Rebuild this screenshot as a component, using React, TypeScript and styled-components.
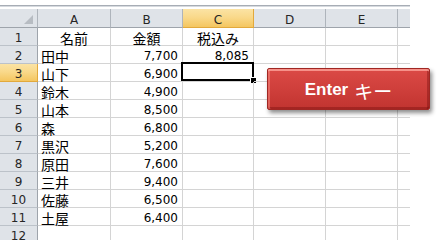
import React from "react";
import styled, { createGlobalStyle, css } from "styled-components";

const Global = createGlobalStyle`
  html, body { margin: 0; padding: 0; background: #ffffff; }
  body { width: 439px; height: 246px; overflow: hidden; }
`;

const Page = styled.div`
  position: relative;
  width: 439px;
  height: 240px;
  overflow: hidden;
  padding-top: 5px;
  box-sizing: border-box;
`;

const TopEdge = styled.div`
  width: 410px;
  height: 2px;
  box-sizing: border-box;
  border-top: 1px solid #a7adb5;
  border-bottom: 1px solid #d6dadf;
  margin-bottom: 2px;
`;

const Grid = styled.div`
  display: grid;
  width: 410px;
  grid-template-columns: 38px 73px 72px 71px 72px 72px 12px;
  grid-template-rows: 19px;
  grid-auto-rows: 18px;
`;

type Kind = "text" | "num" | "center";

const Cell = styled.div<{ $kind?: Kind; $last?: boolean }>`
  position: relative;
  box-sizing: border-box;
  border-right: ${(p) => (p.$last ? "none" : "1px solid #d4d4d4")};
  border-bottom: 1px solid #d4d4d4;
  display: flex;
  align-items: center;
  padding: 2px 3px 0 3px;
  white-space: nowrap;
  color: #000;
  ${(p) =>
    p.$kind === "num"
      ? css`
          justify-content: flex-end;
          font-family: "DejaVu Sans", "Liberation Sans", sans-serif;
          font-size: 12px;
          line-height: 13px;
          padding-right: 4px;
          padding-top: 3px;
        `
      : p.$kind === "center"
      ? css`
          justify-content: center;
          font-family: "Noto Sans CJK JP", "DejaVu Sans", sans-serif;
          font-size: 14px;
          line-height: 14px;
        `
      : css`
          justify-content: flex-start;
          font-family: "Noto Sans CJK JP", "DejaVu Sans", sans-serif;
          font-size: 14px;
          line-height: 14px;
        `}
`;

const activeHeader = css`
  background: linear-gradient(#fbe3a4 0%, #f9d98b 45%, #f4c660 100%);
  border-color: #e2a93c;
`;

const ColHead = styled.div<{ $active?: boolean; $last?: boolean }>`
  box-sizing: border-box;
  background: #dfe3e8;
  border-right: ${(p) => (p.$last ? "none" : "1px solid #aeb4bb")};
  border-bottom: 1px solid #9ea4ab;
  display: flex;
  align-items: center;
  justify-content: center;
  padding-top: 5px;
  font-family: "DejaVu Sans", "Liberation Sans", sans-serif;
  font-size: 12px;
  line-height: 13px;
  color: #262626;
  ${(p) => p.$active && activeHeader}
`;

const Corner = styled(ColHead)`
  justify-content: flex-end;
  align-items: flex-end;
  padding: 0 4px 3px 0;
`;

const RowHead = styled.div<{ $active?: boolean }>`
  box-sizing: border-box;
  background: #dfe3e8;
  border-right: 1px solid #9ea4ab;
  border-bottom: 1px solid #bcc2c9;
  display: flex;
  align-items: center;
  justify-content: center;
  padding-top: 3px;
  font-family: "DejaVu Sans", "Liberation Sans", sans-serif;
  font-size: 12px;
  line-height: 13px;
  color: #262626;
  ${(p) => p.$active && activeHeader}
`;

const Selection = styled.div`
  position: absolute;
  left: -2px;
  top: -2px;
  right: -1px;
  bottom: 0;
  border: 2px solid #000;
  pointer-events: none;
`;

const FillHandle = styled.div`
  position: absolute;
  right: -4px;
  bottom: -4px;
  width: 5px;
  height: 5px;
  background: #000;
  outline: 1px solid #fff;
`;

const EnterButton = styled.div`
  position: absolute;
  left: 267px;
  top: 68px;
  width: 163px;
  height: 42px;
  box-sizing: border-box;
  border-radius: 2px;
  border: 1px solid #a02723;
  background: linear-gradient(#db4a46 0%, #cf3f3b 50%, #c13430 100%);
  box-shadow:
    inset 0 2px 0 rgba(255, 170, 160, 0.75),
    inset 2px 0 0 rgba(255, 150, 140, 0.45),
    inset 0 -2px 0 rgba(110, 10, 8, 0.35),
    inset -2px 0 0 rgba(110, 10, 8, 0.35),
    2px 3px 4px rgba(0, 0, 0, 0.45);
  display: flex;
  align-items: center;
  justify-content: center;
  gap: 6px;
  color: #ffffff;
  padding-top: 2px;
`;

const Latin = styled.span`
  font-family: "Liberation Sans", Arial, sans-serif;
  font-weight: 700;
  font-size: 17px;
`;

const Kana = styled.span`
  font-family: "Noto Sans CJK JP", sans-serif;
  font-weight: 400;
  font-size: 19px;
`;

type Row = { a: string; b: string; c: string };

const rows: Row[] = [
  { a: "名前", b: "金額", c: "税込み" },
  { a: "田中", b: "7,700", c: "8,085" },
  { a: "山下", b: "6,900", c: "" },
  { a: "鈴木", b: "4,900", c: "" },
  { a: "山本", b: "8,500", c: "" },
  { a: "森", b: "6,800", c: "" },
  { a: "黒沢", b: "5,200", c: "" },
  { a: "原田", b: "7,600", c: "" },
  { a: "三井", b: "9,400", c: "" },
  { a: "佐藤", b: "6,500", c: "" },
  { a: "土屋", b: "6,400", c: "" },
  { a: "", b: "", c: "" },
];

const cols = ["A", "B", "C", "D", "E"];

export default function App() {
  return (
    <>
      <Global />
      <Page>
        <TopEdge />
        <Grid>
          <Corner>
            <svg width="9" height="9" viewBox="0 0 9 9">
              <polygon points="9,0 9,9 0,9" fill="#b7bcc2" />
            </svg>
          </Corner>
          {cols.map((c) => (
            <ColHead key={c} $active={c === "C"}>
              {c}
            </ColHead>
          ))}
          <ColHead $last />
          {rows.map((r, i) => {
            const n = i + 1;
            const head = n === 1;
            return (
              <React.Fragment key={n}>
                <RowHead $active={n === 3}>{n}</RowHead>
                <Cell $kind={head ? "center" : "text"}>{r.a}</Cell>
                <Cell $kind={head ? "center" : "num"}>{r.b}</Cell>
                <Cell $kind={head ? "center" : "num"}>
                  {r.c}
                  {n === 3 && (
                    <Selection>
                      <FillHandle />
                    </Selection>
                  )}
                </Cell>
                <Cell />
                <Cell />
                <Cell $last />
              </React.Fragment>
            );
          })}
        </Grid>
        <EnterButton>
          <Latin>Enter</Latin>
          <Kana>キー</Kana>
        </EnterButton>
      </Page>
    </>
  );
}
